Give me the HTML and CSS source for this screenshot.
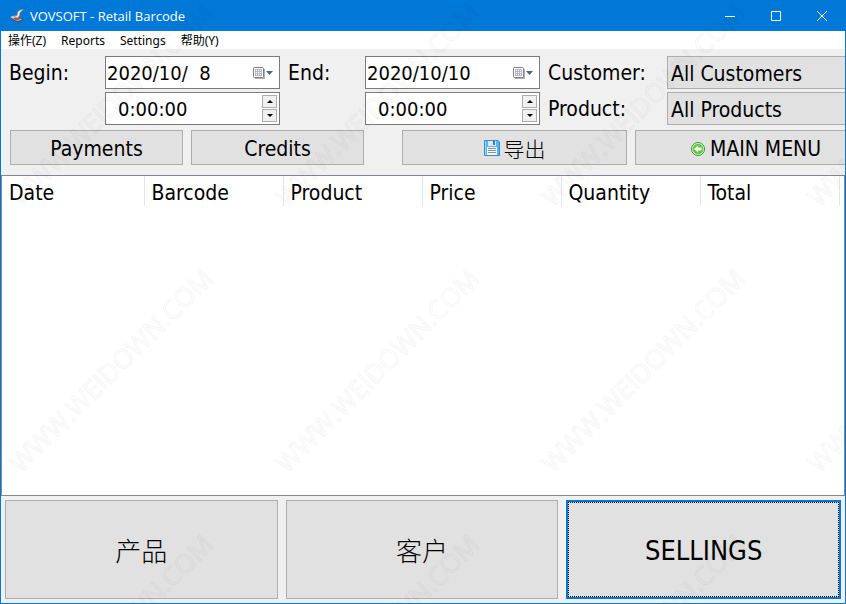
FILE: index.html
```html
<!DOCTYPE html>
<html lang="en">
<head>
    <meta charset="UTF-8">
    <meta name="viewport" content="width=device-width, initial-scale=1.0">
    <title>VOVSOFT - Retail Barcode</title>
    <link rel="stylesheet" href="styles.css">
</head>
<body>
    <div class="window">
        <header class="titlebar">
            <svg class="app-icon" width="16" height="16" viewBox="0 0 16 16">
                <path d="M1 9.500L6 7.500L15 11L9 15Z" fill="#4d5259"/>
                <path d="M1 9L6 7.500L13 11.500L8 13Z" fill="#cfcfcf"/>
                <path d="M4 10L10 9.500L12 11L7 12.500Z" fill="#a8543e"/>
                <path d="M14.500 1.500L11 2L8.500 4L8 7.500L5 8.500L8 10L10.500 8L11 4.500Z" fill="#eee6e2" stroke="#8b8480" stroke-width=".6"/>
            </svg>
            <h1>VOVSOFT - Retail Barcode</h1>
            <div class="window-buttons">
                <button aria-label="Minimize"><svg width="10" height="10" viewBox="0 0 10 10"><path d="M0 5.500H10"/></svg></button>
                <button aria-label="Maximize"><svg width="10" height="10" viewBox="0 0 10 10"><path d="M.5 .5H9.500V9.500H.5Z"/></svg></button>
                <button aria-label="Close"><svg width="10" height="10" viewBox="0 0 10 10"><path d="M0 0L10 10M10 0L0 10"/></svg></button>
            </div>
        </header>

        <nav class="menu">
            <button>操作(Z)</button>
            <button>Reports</button>
            <button>Settings</button>
            <button>帮助(Y)</button>
        </nav>

        <!-- Filters -->
        <form class="filters">
            <label for="beginDate">Begin:</label>
            <div class="field">
                <input type="text" id="beginDate" value="2020/10/  8">
                <button type="button" class="calendar" aria-label="Open calendar">
                    <svg width="22" height="14" viewBox="0 0 22 14"><use href="#calendarIcon"/></svg>
                </button>
            </div>
            <label for="endDate">End:</label>
            <div class="field">
                <input type="text" id="endDate" value="2020/10/10">
                <button type="button" class="calendar" aria-label="Open calendar">
                    <svg width="22" height="14" viewBox="0 0 22 14"><use href="#calendarIcon"/></svg>
                </button>
            </div>
            <label for="customer">Customer:</label>
            <select id="customer"><option>All Customers</option></select>

            <div class="field time begin-time">
                <input type="text" aria-label="Begin time" value="0:00:00">
                <div class="spin">
                    <button type="button" aria-label="Up"><svg width="6" height="3" viewBox="0 0 6 3"><path d="M0 3L3 0L6 3Z"/></svg></button>
                    <button type="button" aria-label="Down"><svg width="6" height="3" viewBox="0 0 6 3"><path d="M0 0L3 3L6 0Z"/></svg></button>
                </div>
            </div>
            <div class="field time end-time">
                <input type="text" aria-label="End time" value="0:00:00">
                <div class="spin">
                    <button type="button" aria-label="Up"><svg width="6" height="3" viewBox="0 0 6 3"><path d="M0 3L3 0L6 3Z"/></svg></button>
                    <button type="button" aria-label="Down"><svg width="6" height="3" viewBox="0 0 6 3"><path d="M0 0L3 3L6 0Z"/></svg></button>
                </div>
            </div>
            <label for="product">Product:</label>
            <select id="product"><option>All Products</option></select>
        </form>

        <div class="toolbar">
            <button>Payments</button>
            <button>Credits</button>
            <button class="export">
                <svg width="16" height="16" viewBox="0 0 16 16">
                    <path d="M.5 .5H14L15.500 2V15.500H.5Z" fill="#56b4ee" stroke="#2b8ed6"/>
                    <path d="M1.500 1V15" stroke="#9bd8fa"/>
                    <rect x="4" y="1" width="8" height="5" fill="#dfe9ef"/>
                    <rect x="9" y="1" width="2" height="4" fill="#2b7fc0"/>
                    <rect x="3" y="7" width="10" height="8" fill="#f7f7f7"/>
                    <path d="M4 8.500H12M4 10.500H12M4 12.500H12" stroke="#8b8f94"/>
                </svg>
                <span class="cjk">导出</span>
            </button>
            <button class="main-menu">
                <svg width="16" height="16" viewBox="0 0 16 16">
                    <circle cx="8" cy="8" r="6.500" fill="#e4f6d8" stroke="#3d8f30"/>
                    <circle cx="8" cy="8" r="5.200" fill="#5fc93c"/>
                    <path d="M4 8L8 4.500V6.500H11.500V9.500H8V11.500Z" fill="#fff"/>
                </svg>
                <span>MAIN MENU</span>
            </button>
        </div>

        <!-- Report list -->
        <div class="list">
            <table>
                <thead>
                    <tr>
                        <th class="first">Date</th>
                        <th>Barcode</th>
                        <th>Product</th>
                        <th>Price</th>
                        <th>Quantity</th>
                        <th>Total</th>
                    </tr>
                </thead>
                <tbody></tbody>
            </table>
        </div>

        <footer class="tabs">
            <button class="cjk">产品</button>
            <button class="cjk">客户</button>
            <button class="active">SELLINGS</button>
        </footer>
    </div>

    <svg class="watermark" width="100%" height="100%">
        <defs>
            <g id="calendarIcon">
                <path d="M3 3H13V13H3Z" fill="#b4b0ae"/>
                <rect x="1.500" y="1.500" width="10" height="10" rx="1" fill="#fff" stroke="#857c7a"/>
                <path d="M3 3.500H10M3 5.500H10M3 7.500H10M3 9.500H10M3.500 3V10M5.500 3V10M7.500 3V10M9.500 3V10" stroke="#a3acc4" stroke-width=".8"/>
                <path d="M14 5H21L17.500 9Z" fill="#4a6590"/>
            </g>
            <pattern id="mark" width="266" height="266" patternUnits="userSpaceOnUse">
                <text transform="translate(21 208) rotate(-45)">WWW.WEIDOWN.COM</text>
            </pattern>
        </defs>
        <rect width="100%" height="100%" fill="url(#mark)"/>
    </svg>
</body>
</html>
```
FILE: styles.css
```css
* {
    box-sizing: border-box;
}
body {
    margin: 0;
    font-family: "DejaVu Sans Condensed", "Noto Sans", "Noto Sans CJK SC", sans-serif;
    font-size: 21px;
    color: #000;
}
button, input, select {
    font: inherit;
    color: inherit;
    margin: 0;
    padding: 0;
    border-radius: 0;
}
.window {
    display: flex;
    flex-direction: column;
    min-height: 100vh;
    border: 1px solid #0078d7;
    background-color: #f0f0f0;
    overflow: hidden;
}

/* Title bar and menu */
.titlebar {
    display: flex;
    align-items: center;
    height: 30px;
    padding-left: 8px;
    background-color: #0078d7;
    color: #fff;
}
.titlebar h1 {
    flex: 1;
    margin: 0 0 0 5px;
    font: 13px/28px "Open Sans", sans-serif;
}
.window-buttons {
    display: flex;
}
.window-buttons button {
    width: 46px;
    height: 28px;
    border: none;
    background: none;
}
.window-buttons svg {
    display: block;
    margin: 0 auto;
    fill: none;
    stroke: #fff;
}
.menu {
    display: flex;
    gap: 15px;
    height: 18px;
    padding-left: 7px;
    background-color: #fff;
}
.menu button {
    border: none;
    background: none;
    font: 12px/20px "Noto Sans", "Noto Sans CJK SC", sans-serif;
}

/* Filters */
.filters {
    display: grid;
    grid-template-columns: 88px 175px 69px 175px 111px 210px;
    grid-auto-rows: 33px;
    gap: 3px 8px;
    align-items: center;
    padding: 7px 0 5px 8px;
}
.field {
    display: flex;
    align-items: center;
    height: 33px;
    padding: 0 2px 0 1px;
    border: 1px solid #7a7a7a;
    background-color: #fff;
}
.field input {
    flex: 1;
    min-width: 0;
    border: none;
    background: none;
    outline: none;
    font-size: 20px;
}
.begin-time {
    grid-column: 2;
}
.end-time {
    grid-column: 4;
}
.time {
    padding-left: 12px;
}
.calendar {
    width: 25px;
    height: 28px;
    border: none;
    background: none;
}
.calendar svg {
    display: block;
}
.spin {
    display: flex;
    flex-direction: column;
    gap: 1px;
}
.spin button {
    width: 15px;
    height: 13px;
    border: 1px solid #adadad;
    background-color: #f0f0f0;
}
.spin svg {
    display: block;
    margin: 0 auto;
}
select {
    appearance: none;
    height: 33px;
    padding: 2px 3px 0;
    border: 1px solid #adadad;
    background-color: #e1e1e1;
}

/* Buttons */
.toolbar {
    display: flex;
    gap: 8px;
    padding: 0 0 10px 9px;
}
.toolbar button {
    display: flex;
    flex: none;
    align-items: center;
    justify-content: center;
    gap: 4px;
    width: 173px;
    height: 35px;
    padding-top: 2px;
    border: 1px solid #adadad;
    background-color: #e1e1e1;
}
.toolbar .export {
    width: 225px;
    margin-left: 30px;
    padding-top: 0;
}
.toolbar .main-menu {
    width: 241px;
}
.cjk {
    font-family: "Noto Sans CJK SC", sans-serif;
    font-weight: 300;
    line-height: 28px;
}

/* List */
.list {
    flex: 1;
    border: 1px solid #828790;
    background-color: #fff;
}
table {
    border-collapse: collapse;
    table-layout: fixed;
    width: 837px;
}
th {
    width: 139px;
    height: 30px;
    padding: 3px 0 0 7px;
    border-right: 1px solid #e5e5e5;
    font-weight: normal;
    text-align: left;
}
th.first {
    width: 142px;
}

/* Bottom tabs */
.tabs {
    display: flex;
    gap: 8px;
    padding: 4px;
}
.tabs button {
    flex: 1;
    height: 99px;
    padding-top: 2px;
    border: 1px solid #adadad;
    background-color: #e1e1e1;
    font-size: 27px;
}
.tabs .cjk {
    padding-top: 0;
    font-size: 26px;
}
.tabs .active {
    border: 2px solid #0078d7;
    outline: 1px dotted #000;
    outline-offset: -3px;
}

.watermark {
    position: absolute;
    top: 0;
    left: 0;
    pointer-events: none;
}
.watermark text {
    font: 26px "Open Sans", sans-serif;
    fill: none;
    stroke: rgba(0, 0, 0, .04);
}
```
